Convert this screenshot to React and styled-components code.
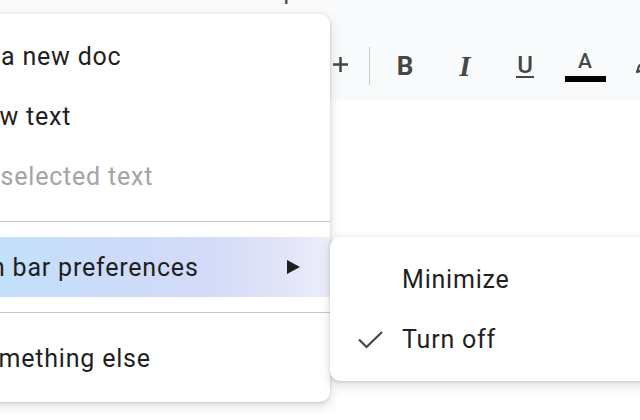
import React from "react";
import styled, { createGlobalStyle } from "styled-components";

const Global = createGlobalStyle`
  html, body { margin: 0; padding: 0; background: #ffffff; }
  body { font-family: Roboto, "Noto Sans", Arial, sans-serif; }
  #root { width: 640px; height: 420px; }
`;

const Stage = styled.div`
  position: relative;
  width: 640px;
  height: 420px;
  overflow: hidden;
  background: #ffffff;
`;

const Band = styled.header`
  height: 100px;
  background: #f9fafc;
  display: flex;
  flex-direction: column;
`;

const MenuBarText = styled.div`
  margin-top: -21px;
  margin-left: -64px;
  height: 24px;
  font-size: 24px;
  line-height: 24px;
  color: #444746;
  white-space: nowrap;
  word-spacing: 14px;
`;

const Tools = styled.div`
  display: flex;
  align-items: center;
  height: 40px;
  margin-top: 43px;
  padding-left: 320px;
  gap: 20px;
`;

const ToolButton = styled.div`
  width: 40px;
  height: 40px;
  flex: none;
  display: flex;
  flex-direction: column;
  align-items: center;
  justify-content: center;
  color: #444746;
  margin-top: ${(p) => p.$dy || 0}px;
`;

const Divider = styled.div`
  width: 1px;
  height: 38px;
  background: #c7c7c7;
  flex: none;
  margin: 0 -5px 0 -11px;
`;

const BoldGlyph = styled.span`
  font-family: Roboto, Arial, sans-serif;
  font-weight: 700;
  font-size: 26px;
  line-height: 1;
`;

const ItalicGlyph = styled.span`
  font-family: "Liberation Serif", "DejaVu Serif", serif;
  font-style: italic;
  font-weight: 700;
  font-size: 29px;
  line-height: 1;
`;

const UnderGlyph = styled.span`
  font-family: Roboto, Arial, sans-serif;
  font-weight: 500;
  font-size: 24px;
  line-height: 18px;
  padding: 0 1px 2px;
  border-bottom: 2.5px solid #444746;
`;

const ColorGlyph = styled.span`
  font-family: Roboto, Arial, sans-serif;
  font-weight: 500;
  font-size: 21px;
  line-height: 15px;
`;

const ColorBar = styled.div`
  width: 41px;
  height: 6px;
  margin-top: 7px;
  background: #000000;
`;

const Menu = styled.div`
  position: absolute;
  left: -20px;
  top: 14px;
  width: 350px;
  padding: 12px 0 14px;
  box-sizing: border-box;
  background: #ffffff;
  border-radius: 10px;
  box-shadow: 0 1px 3px rgba(60, 64, 67, 0.22), 0 4px 10px 2px rgba(60, 64, 67, 0.12);
  z-index: 1;
`;

const SubMenu = styled(Menu)`
  left: 330px;
  top: 237px;
  width: 330px;
  padding: 12px 0;
  z-index: 2;
`;

const Item = styled.div`
  height: 60px;
  display: flex;
  align-items: center;
  justify-content: space-between;
  padding: 0 30px 0 20px;
  font-size: 25px;
  letter-spacing: 0.8px;
  color: ${(p) => (p.$disabled ? "#a4a4a4" : "#1f1f1f")};
  background: ${(p) =>
    p.$active
      ? "linear-gradient(90deg, #c0e1fb 0%, #cbdcf9 35%, #d3dbf8 65%, #e2e5f8 88%, #eceef9 100%)"
      : "transparent"};
  white-space: nowrap;
`;

const Label = styled.span`
  margin-left: ${(p) => p.$shift || 0}px;
`;

const Separator = styled.div`
  height: 1px;
  margin: 15px 0;
  background: #c7c7c7;
`;

const SubItem = styled.div`
  height: 60px;
  display: flex;
  align-items: center;
  gap: 19px;
  padding-left: 28px;
  font-size: 25px;
  letter-spacing: 0.8px;
  color: #1f1f1f;
`;

const CheckSlot = styled.span`
  width: 25px;
  height: 20px;
  flex: none;
  display: flex;
  align-items: center;
  visibility: ${(p) => (p.$on ? "visible" : "hidden")};
  margin-top: 2px;
`;

const Plus = () => (
  <svg width="15" height="15" viewBox="0 0 15 15">
    <path d="M7.5 0v15M0 7.5h15" stroke="#444746" strokeWidth="2.5" />
  </svg>
);

const Pen = () => (
  <svg width="22" height="22" viewBox="0 0 22 22">
    <path d="M3 17l2-6L14 2l4 4-9 9z" fill="none" stroke="#444746" strokeWidth="2.2" strokeLinejoin="round" />
  </svg>
);

const Arrow = () => (
  <svg width="13" height="14" viewBox="0 0 13 14">
    <path d="M0 0L13 7L0 14z" fill="#1f1f1f" />
  </svg>
);

const Check = () => (
  <svg width="25" height="18" viewBox="0 0 25 18">
    <path d="M1 8.5L8.5 16L24 1" fill="none" stroke="#444746" strokeWidth="2.2" />
  </svg>
);

export default function App() {
  return (
    <>
      <Global />
      <Stage>
        <Band>
          <MenuBarText>Format Tools Extensions Help</MenuBarText>
          <Tools>
            <ToolButton $dy={-4}>
              <Plus />
            </ToolButton>
            <Divider />
            <ToolButton>
              <BoldGlyph>B</BoldGlyph>
            </ToolButton>
            <ToolButton>
              <ItalicGlyph>I</ItalicGlyph>
            </ToolButton>
            <ToolButton $dy={2}>
              <UnderGlyph>U</UnderGlyph>
            </ToolButton>
            <ToolButton $dy={4}>
              <ColorGlyph>A</ColorGlyph>
              <ColorBar />
            </ToolButton>
            <ToolButton>
              <Pen />
            </ToolButton>
          </Tools>
        </Band>

        <Menu>
          <Item>
            <Label $shift={1}>a new doc</Label>
          </Item>
          <Item>
            <Label $shift={-0.5}>w text</Label>
          </Item>
          <Item $disabled>
            <Label $shift={0.5}>selected text</Label>
          </Item>
          <Separator />
          <Item $active>
            <Label $shift={-9}>h bar preferences</Label>
            <Arrow />
          </Item>
          <Separator />
          <Item>
            <Label $shift={-1.5}>mething else</Label>
          </Item>
        </Menu>

        <SubMenu>
          <SubItem>
            <CheckSlot>
              <Check />
            </CheckSlot>
            <span>Minimize</span>
          </SubItem>
          <SubItem>
            <CheckSlot $on>
              <Check />
            </CheckSlot>
            <span>Turn off</span>
          </SubItem>
        </SubMenu>
      </Stage>
    </>
  );
}
